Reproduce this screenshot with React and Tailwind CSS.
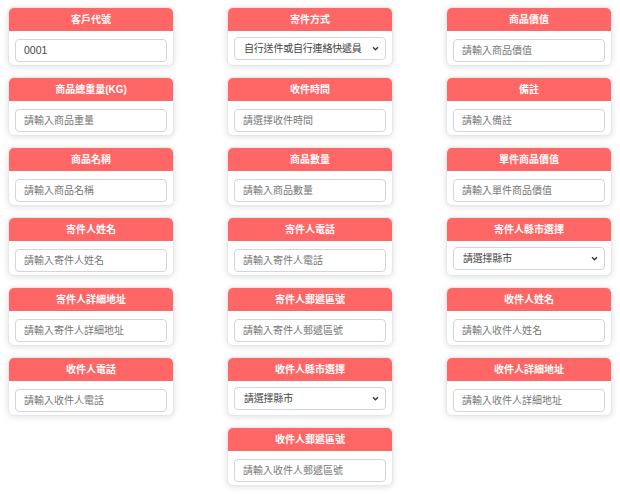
import React from 'react';

const fields = [
  { label: '客戶代號', type: 'input', value: '0001' },
  { label: '寄件方式', type: 'select', value: '自行送件或自行連絡快遞員' },
  { label: '商品價值', type: 'input', placeholder: '請輸入商品價值' },
  { label: '商品總重量(KG)', type: 'input', placeholder: '請輸入商品重量' },
  { label: '收件時間', type: 'input', placeholder: '請選擇收件時間' },
  { label: '備註', type: 'input', placeholder: '請輸入備註' },
  { label: '商品名稱', type: 'input', placeholder: '請輸入商品名稱' },
  { label: '商品數量', type: 'input', placeholder: '請輸入商品數量' },
  { label: '單件商品價值', type: 'input', placeholder: '請輸入單件商品價值' },
  { label: '寄件人姓名', type: 'input', placeholder: '請輸入寄件人姓名' },
  { label: '寄件人電話', type: 'input', placeholder: '請輸入寄件人電話' },
  { label: '寄件人縣市選擇', type: 'select', value: '請選擇縣市' },
  { label: '寄件人詳細地址', type: 'input', placeholder: '請輸入寄件人詳細地址' },
  { label: '寄件人郵遞區號', type: 'input', placeholder: '請輸入寄件人郵遞區號' },
  { label: '收件人姓名', type: 'input', placeholder: '請輸入收件人姓名' },
  { label: '收件人電話', type: 'input', placeholder: '請輸入收件人電話' },
  { label: '收件人縣市選擇', type: 'select', value: '請選擇縣市' },
  { label: '收件人詳細地址', type: 'input', placeholder: '請輸入收件人詳細地址' },
  { label: '收件人郵遞區號', type: 'input', placeholder: '請輸入收件人郵遞區號', className: 'col-start-2' },
];

function Card({ field }) {
  return (
    <div className={`w-[166px] h-[59px] rounded-md border border-gray-200 bg-white shadow-[0_1px_6px_rgba(0,0,0,0.12)] overflow-hidden ${field.className || ''}`}>
      <div className="h-[23px] bg-[#ff6666] flex items-center justify-center text-white text-[10px] font-bold">
        {field.label}
      </div>
      <div className="px-[6px] pt-[6px]">
        {field.type === 'select' ? (
          <div className="h-[23px] rounded border border-gray-300 flex items-center justify-between pl-[9px] pr-[6px] text-[10px] tracking-[-0.2px] text-[#444] whitespace-nowrap">
            <span>{field.value}</span>
            <svg width="7" height="5" viewBox="0 0 8 6"><path d="M1 1.5 L4 4.5 L7 1.5" fill="none" stroke="#333" strokeWidth="1.6" /></svg>
          </div>
        ) : (
          <input
            readOnly
            defaultValue={field.value}
            placeholder={field.placeholder}
            className="w-full h-[23px] rounded border border-gray-300 px-[8px] text-[10.5px] placeholder:text-[10px] text-[#444] placeholder:text-[#777] outline-none"
          />
        )}
      </div>
    </div>
  );
}

export default function App() {
  return (
    <div
      className="bg-white w-[620px] h-[494px] pl-[8px] pt-[7px]"
      style={{ fontFamily: '"Liberation Sans", "Noto Sans CJK TC", sans-serif' }}
    >
      <div className="grid grid-cols-[166px_166px_166px] gap-x-[53px] gap-y-[11px]">
        {fields.map(f => <Card key={f.label} field={f} />)}
      </div>
    </div>
  );
}
